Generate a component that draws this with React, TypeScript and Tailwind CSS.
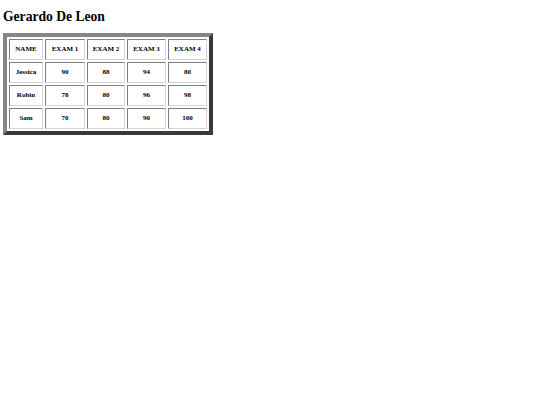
const rows = [
  { name: 'Jessica', scores: [90, 88, 94, 80] },
  { name: 'Robin', scores: [78, 80, 96, 98] },
  { name: 'Sam', scores: [70, 80, 90, 100] },
];

const widths = ['w-[34px]', 'w-[40px]', 'w-[38px]', 'w-[39px]', 'w-[39px]'];

const cell =
  'h-[21px] p-0 text-center align-middle border border-t-[#808080] border-l-[#808080] border-r-[#d4d4d4] border-b-[#d4d4d4]';

export default function App() {
  return (
    <div className="min-h-[405px] bg-white pl-[3px] pt-[9px] text-black" style={{ fontFamily: '"Liberation Serif", serif' }}>
      <h2 className="text-[13.6px] font-bold leading-[16px] mb-[8px]">Gerardo De Leon</h2>

      <table className="border-separate border-spacing-[2px] border-[4px] border-t-[#868686] border-l-[#868686] border-r-[#3a3a3a] border-b-[#3a3a3a] text-[7px] font-bold">
        <thead>
          <tr>
            {['NAME', 'EXAM 1', 'EXAM 2', 'EXAM 3', 'EXAM 4'].map((h, i) => (
              <th key={h} className={`${cell} ${widths[i]} font-bold`}>
                {h}
              </th>
            ))}
          </tr>
        </thead>
        <tbody>
          {rows.map((r) => (
            <tr key={r.name}>
              <td className={`${cell} ${widths[0]}`}>{r.name}</td>
              {r.scores.map((s, i) => (
                <td key={i} className={`${cell} ${widths[i + 1]}`}>
                  {s}
                </td>
              ))}
            </tr>
          ))}
        </tbody>
      </table>
    </div>
  );
}
